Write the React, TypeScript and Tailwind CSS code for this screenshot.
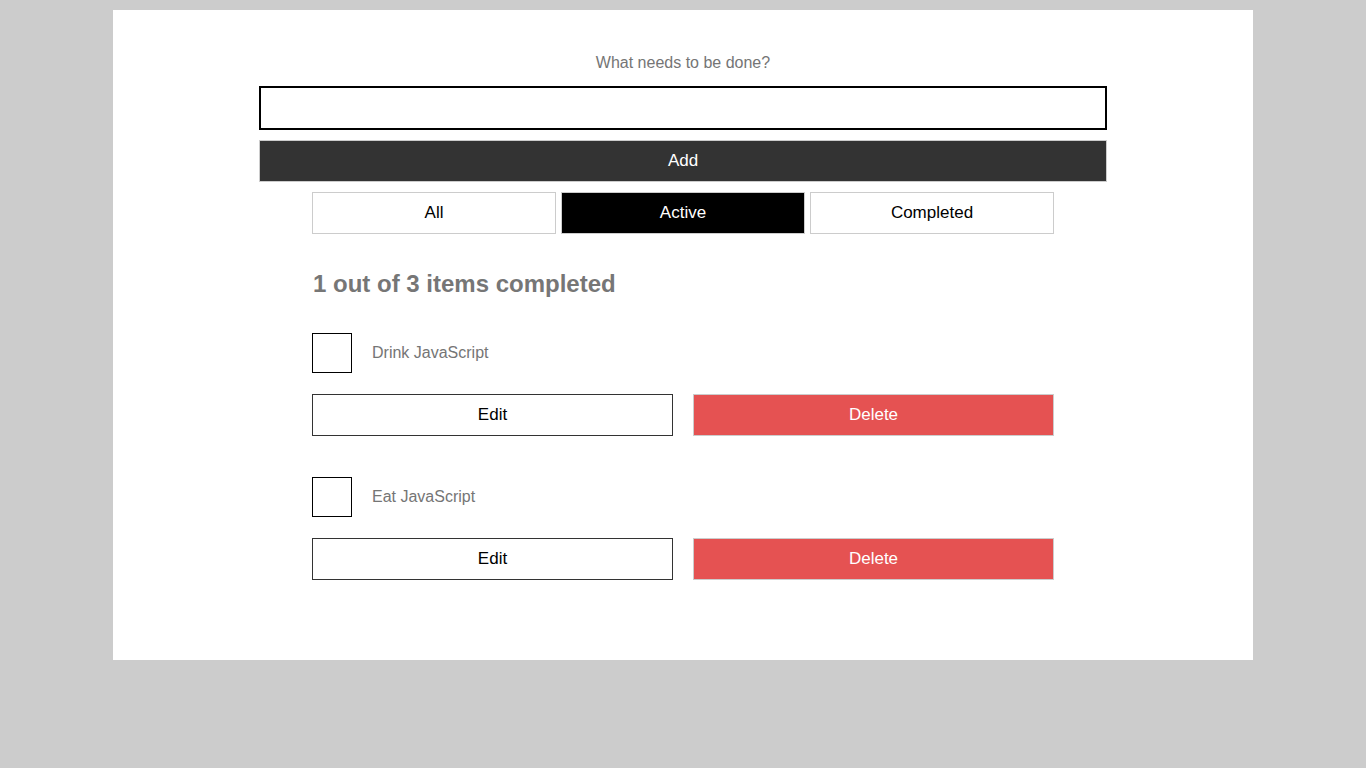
import React from "react";

const items = ["Drink JavaScript", "Eat JavaScript"];

export default function App() {
  return (
    <div className="min-h-[768px] w-full bg-[#cccccc] pt-[10px] font-['Liberation_Sans',Arial,sans-serif]">
      <div className="mx-auto flex h-[650px] w-[1140px] flex-col items-center bg-white">
        <label className="mt-[44px] block h-[18px] text-[16px] leading-[18px] text-[#757575]">
          What needs to be done?
        </label>
        <input
          type="text"
          className="mt-[14px] box-border h-[44px] w-[848px] border-2 border-black bg-white px-2 text-[16px] outline-none"
        />
        <button className="mt-[10px] box-border h-[42px] w-[848px] border border-[#cccccc] bg-[#333333] text-[17px] text-white">
          Add
        </button>
        <div className="mt-[10px] flex w-[742px] gap-[5px]">
          <button className="box-border h-[42px] w-[244px] border border-[#cccccc] bg-white text-[17px] text-black">
            All
          </button>
          <button className="box-border h-[42px] w-[244px] border border-[#cccccc] bg-black text-[17px] text-white">
            Active
          </button>
          <button className="box-border h-[42px] w-[244px] border border-[#cccccc] bg-white text-[17px] text-black">
            Completed
          </button>
        </div>
        <div className="w-[742px]">
          <h2 className="mt-[36px] h-[28px] pl-px text-[24px] font-bold leading-[28px] text-[#767676]">
            1 out of 3 items completed
          </h2>
          {items.map((name, i) => (
            <div key={name} className={i === 0 ? "mt-[35px]" : "mt-[41px]"}>
              <div className="flex h-[40px] items-center">
                <div className="box-border h-[40px] w-[40px] border border-black bg-white" />
                <span className="ml-[20px] text-[16px] text-[#757575]">{name}</span>
              </div>
              <div className="mt-[21px] flex justify-between">
                <button className="box-border h-[42px] w-[361px] border border-[#333333] bg-white text-[17px] text-black">
                  Edit
                </button>
                <button className="box-border h-[42px] w-[361px] border border-[#cccccc] bg-[#e55252] text-[17px] text-white">
                  Delete
                </button>
              </div>
            </div>
          ))}
        </div>
      </div>
    </div>
  );
}
